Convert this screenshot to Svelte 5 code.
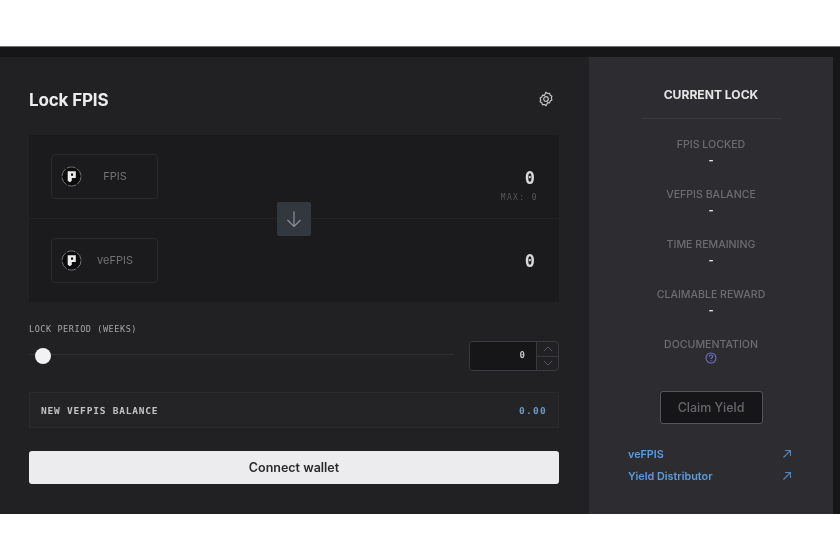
<script lang="ts">
    const stats = [
        { label: "FPIS LOCKED", value: "-" },
        { label: "VEFPIS BALANCE", value: "-" },
        { label: "TIME REMAINING", value: "-" },
        { label: "CLAIMABLE REWARD", value: "-" },
    ];
    const links = ["veFPIS", "Yield Distributor"];
</script>

{#snippet tokenIcon()}
    <svg class="token-icon" width="21" height="21" viewBox="0 0 22 22">
        <circle cx="11" cy="11" r="10" fill="#0c0c0d" stroke="#77777a" stroke-width="1" stroke-dasharray="9 1.5" />
        <path d="M7 5.5h8.5v7h-4.2v3l-2 1.5-2.3-1.5z M10.5 7.8v2.4h2.2v-2.4z" fill="#ececec" fill-rule="evenodd" />
    </svg>
{/snippet}

<div class="page">
    <div class="shell">
        <main class="left">
            <header class="head">
                <h1>Lock FPIS</h1>
                <svg width="16" height="16" viewBox="0 0 16 16" fill="none" stroke="#c4c4c6" stroke-width="1.2">
                    <path d="M8 1.2l1.5 1.3 2-.2.7 1.9 1.7 1-.6 1.9.6 1.9-1.7 1-.7 1.9-2-.2L8 14.8l-1.5-1.3-2 .2-.7-1.9-1.7-1 .6-1.9-.6-1.9 1.7-1 .7-1.9 2 .2z" stroke-linejoin="round" />
                    <circle cx="8" cy="8" r="2.3" />
                </svg>
            </header>

            <section class="swap">
                <div class="row first">
                    <div class="token">
                        {@render tokenIcon()}
                        <span class="name">FPIS</span>
                    </div>
                    <div class="amount">
                        <span class="zero">0</span>
                        <span class="max">MAX: 0</span>
                    </div>
                </div>
                <div class="row second">
                    <div class="token">
                        {@render tokenIcon()}
                        <span class="name">veFPIS</span>
                    </div>
                    <div class="amount">
                        <span class="zero">0</span>
                    </div>
                </div>
                <div class="arrow">
                    <svg width="20" height="20" viewBox="0 0 20 20" fill="none" stroke="#8b929b" stroke-width="1.2">
                        <path d="M10 2.5v15M3.5 11l6.5 6.5 6.5-6.5" />
                    </svg>
                </div>
            </section>

            <div class="period-label">LOCK PERIOD (WEEKS)</div>
            <div class="period">
                <div class="slider">
                    <span class="thumb"></span>
                </div>
                <div class="stepper">
                    <span class="stepper-value">0</span>
                    <div class="steps">
                        <span class="step">
                            <svg width="10" height="6" viewBox="0 0 10 6" fill="none" stroke="#55555a"><path d="M1 5l4-4 4 4" /></svg>
                        </span>
                        <span class="step">
                            <svg width="10" height="6" viewBox="0 0 10 6" fill="none" stroke="#55555a"><path d="M1 1l4 4 4-4" /></svg>
                        </span>
                    </div>
                </div>
            </div>

            <div class="balance">
                <span>NEW VEFPIS BALANCE</span>
                <span class="balance-value">0.00</span>
            </div>

            <button class="connect">Connect wallet</button>
        </main>

        <aside class="right">
            <h2>CURRENT LOCK</h2>
            <div class="rule"></div>
            {#each stats as stat}
                <div class="stat">
                    <div class="stat-label">{stat.label}</div>
                    <div class="stat-value">{stat.value}</div>
                </div>
            {/each}
            <div class="stat">
                <div class="stat-label">DOCUMENTATION</div>
                <svg class="help" width="12" height="12" viewBox="0 0 12 12" fill="none" stroke="#6f6fc4" stroke-width="1.1">
                    <circle cx="6" cy="6" r="5" />
                    <path d="M4.3 4.7c0-2.2 3.5-2.2 3.5-.2 0 1.3-1.8 1.3-1.8 2.6M6 8.2v1" />
                </svg>
            </div>
            <button class="claim">Claim Yield</button>
            <div class="links">
                {#each links as link}
                    <div class="link">
                        <span>{link}</span>
                        <svg width="10" height="10" viewBox="0 0 10 10" fill="none" stroke="#4f86bd" stroke-width="1.1">
                            <path d="M1.5 8.5l7-7M3 1.5h5.5V7" />
                        </svg>
                    </div>
                {/each}
            </div>
        </aside>
    </div>
</div>

<style>
    :global(body) {
        margin: 0;
        background: #fff;
    }
    .page {
        width: 840px;
        height: 560px;
        padding-top: 47px;
        box-sizing: border-box;
        overflow: hidden;
        filter: blur(0.6px);
        font-family: Inter, "Liberation Sans", sans-serif;
    }
    .shell {
        display: flex;
        height: 468px;
        box-sizing: border-box;
        padding: 10px 7px 0 0;
        background: #161618;
        border-top: 1px solid #77777a;
        margin-top: -1px;
    }
    .left {
        width: 589px;
        box-sizing: border-box;
        padding: 0 30px 0 29px;
        background: #212123;
    }
    .head {
        display: flex;
        justify-content: space-between;
        align-items: center;
        height: 78px;
        padding-right: 5px;
        box-sizing: border-box;
        padding-top: 6px;
    }
    h1 {
        margin: 2px 0 0;
        font-size: 17px;
        font-weight: 700;
        letter-spacing: -0.15px;
        color: #ececec;
    }
    .swap {
        position: relative;
        background: #1b1b1d;
        height: 167px;
    }
    .row {
        display: flex;
        justify-content: space-between;
        height: 83px;
        box-sizing: border-box;
        padding: 19px 24px 0 22px;
    }
    .first {
        height: 84px;
        border-bottom: 1px solid #232325;
    }
    .token {
        display: flex;
        align-items: center;
        width: 107px;
        height: 45px;
        box-sizing: border-box;
        padding-left: 9px;
        border: 1px solid #2a2a2c;
        border-radius: 4px;
    }
    .name {
        flex: 1;
        margin-top: -2px;
        text-align: center;
        font-size: 11px;
        color: #727274;
        padding-right: 9px;
    }
    .amount {
        display: flex;
        flex-direction: column;
        align-items: flex-end;
        font-family: "DejaVu Sans Mono", monospace;
    }
    .zero {
        margin-top: 15px;
        font-size: 17px;
        font-weight: 700;
        line-height: 18px;
        color: #d8d8d8;
    }
    .second .zero {
        margin-top: 14px;
    }
    .max {
        margin-top: 6px;
        margin-right: -3px;
        font-size: 8px;
        letter-spacing: 1.4px;
        line-height: 10px;
        color: #58585b;
    }
    .arrow {
        position: absolute;
        left: 248px;
        top: 67px;
        display: flex;
        align-items: center;
        justify-content: center;
        width: 34px;
        height: 34px;
        border-radius: 2px;
        background: #33383e;
    }
    .period-label {
        margin-top: 22px;
        font-family: "DejaVu Sans Mono", monospace;
        font-size: 8.5px;
        line-height: 10px;
        letter-spacing: 0.57px;
        color: #a8a8aa;
    }
    .period {
        display: flex;
        align-items: center;
        gap: 15px;
        margin-top: 7px;
    }
    .slider {
        position: relative;
        flex: 1;
        height: 1px;
        margin-top: -3px;
        background: #303033;
    }
    .thumb {
        position: absolute;
        left: 6px;
        top: -6px;
        width: 16px;
        height: 16px;
        border-radius: 50%;
        background: #f2f2f4;
    }
    .stepper {
        display: flex;
        width: 90px;
        height: 30px;
        box-sizing: border-box;
        border: 1.5px solid #3a3a3e;
        border-radius: 4px;
        overflow: hidden;
    }
    .stepper-value {
        flex: 1;
        padding-right: 11px;
        text-align: right;
        background: #161618;
        font-family: "DejaVu Sans Mono", monospace;
        font-size: 9px;
        font-weight: 700;
        line-height: 27px;
        color: #c8c8c8;
    }
    .steps {
        display: flex;
        flex-direction: column;
        width: 21px;
        border-left: 1.5px solid #3a3a3e;
    }
    .step {
        flex: 1;
        display: flex;
        align-items: center;
        justify-content: center;
    }
    .step + .step {
        border-top: 1.5px solid #3a3a3e;
    }
    .balance {
        display: flex;
        justify-content: space-between;
        align-items: center;
        height: 36px;
        box-sizing: border-box;
        margin-top: 21px;
        padding: 0 11px;
        background: #242427;
        border: 1px solid #2b2b2e;
        font-family: "DejaVu Sans Mono", monospace;
        font-size: 9.5px;
        font-weight: 700;
        letter-spacing: 0.8px;
        color: #c2c2c4;
    }
    .balance-value {
        letter-spacing: 1.3px;
        color: #6d98c4;
    }
    .connect {
        display: block;
        width: 100%;
        height: 33px;
        margin-top: 23px;
        border: none;
        border-radius: 3px;
        background: #ececee;
        color: #2a2a2c;
        font-family: inherit;
        font-size: 12.5px;
        font-weight: 600;
    }
    .right {
        flex: 1;
        display: flex;
        flex-direction: column;
        align-items: center;
        background: #2d2d31;
    }
    h2 {
        margin: 30px 0 0;
        font-size: 12.1px;
        line-height: 16px;
        font-weight: 700;
        color: #e6e6e6;
    }
    .rule {
        width: 139px;
        height: 1px;
        margin: 15px 0 19px;
        background: #3a3a3e;
    }
    .stat {
        display: flex;
        flex-direction: column;
        align-items: center;
        height: 50px;
    }
    .stat-label {
        font-size: 10.6px;
        font-weight: 500;
        line-height: 14px;
        color: #6d6d71;
    }
    .stat-value {
        font-size: 11px;
        font-weight: 700;
        line-height: 16px;
        color: #e4e4e4;
    }
    .help {
        margin-top: 0;
    }
    .claim {
        width: 103px;
        height: 33px;
        margin-top: 3px;
        border: 1.5px solid #55555a;
        border-radius: 3px;
        background: #161618;
        color: #68686c;
        font-family: inherit;
        font-size: 12.5px;
        font-weight: 500;
    }
    .links {
        align-self: stretch;
        margin-top: 19px;
        padding: 0 41px 0 39px;
    }
    .link {
        display: flex;
        justify-content: space-between;
        align-items: center;
        height: 22px;
        font-size: 10.8px;
        font-weight: 600;
        color: #5c9bdc;
    }
</style>
